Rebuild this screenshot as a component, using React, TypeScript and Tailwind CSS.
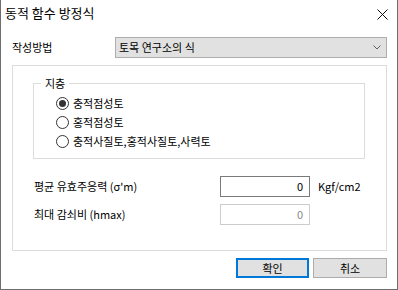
import React from "react";

const KR = '"Noto Sans CJK KR", "Noto Sans", sans-serif';

function Radio({ checked, label }: { checked?: boolean; label: string }) {
  return (
    <div className="flex items-center h-[19px]">
      <span className="w-[13px] h-[13px] rounded-full border border-[#333333] bg-white flex items-center justify-center">
        {checked && <span className="w-[7px] h-[7px] rounded-full bg-[#333333]" />}
      </span>
      <span className="ml-[4px] text-[11px] leading-none text-black">{label}</span>
    </div>
  );
}

export default function App() {
  return (
    <div
      className="w-[398px] h-[290px] bg-white border-x border-b border-[#6e6e6e] flex flex-col"
      style={{ fontFamily: KR }}
    >
      {/* Title bar */}
      <div className="h-[30px] flex items-start justify-between">
        <span className="ml-[4px] mt-[3px] text-[13px] leading-[20px] text-black">동적 함수 방정식</span>
        <svg className="mt-[9px] mr-[9px]" width="11" height="11" viewBox="0 0 11 11">
          <path d="M0.5 0.5 L10.5 10.5 M10.5 0.5 L0.5 10.5" stroke="#111" strokeWidth="1" fill="none" />
        </svg>
      </div>

      {/* Method row */}
      <div className="mt-[7px] flex items-center h-[21px] pl-[11px]">
        <span className="w-[103px] text-[11px] leading-none text-black">작성방법</span>
        <div className="w-[272px] h-[21px] bg-[#e1e1e1] border border-[#adadad] flex items-center justify-between pl-[3px] pr-[5px]">
          <span className="text-[11px] leading-none text-black">토목 연구소의 식</span>
          <svg width="8" height="5" viewBox="0 0 8 5">
            <path d="M0.5 0.5 L4 4 L7.5 0.5" stroke="#606060" strokeWidth="1" fill="none" />
          </svg>
        </div>
      </div>

      {/* Panel */}
      <div className="mt-[7px] ml-[11px] w-[375px] h-[186px] border border-[#dcdcdc] flex flex-col">
        {/* Group box */}
        <div className="relative mt-[17px] ml-[20px] w-[332px] h-[76px] border border-[#dcdcdc] flex flex-col pl-[22px] pt-[10px]">
          <span className="absolute -top-[7px] left-[7px] px-[4px] bg-white text-[11px] leading-[13px] text-black">지층</span>
          <Radio checked label="충적점성토" />
          <Radio label="홍적점성토" />
          <Radio label="충적사질토,홍적사질토,사력토" />
        </div>

        {/* Inputs */}
        <div className="mt-[17px] pl-[21px] flex items-center h-[21px]">
          <span className="w-[186px] text-[11px] leading-none text-black">평균 유효주응력 (σ'm)</span>
          <div className="w-[90px] h-[21px] border border-[#7a7a7a] bg-white flex items-center justify-end pr-[6px]">
            <span className="text-[11px] leading-none text-black">0</span>
          </div>
          <span className="ml-[8px] text-[11px] leading-none text-black">Kgf/cm2</span>
        </div>
        <div className="mt-[7px] pl-[21px] flex items-center h-[21px]">
          <span className="w-[186px] text-[11px] leading-none text-black">최대 감쇠비 (hmax)</span>
          <div className="w-[90px] h-[21px] border border-[#cccccc] bg-white flex items-center justify-end pr-[6px]">
            <span className="text-[11px] leading-none text-[#8a8a8a]">0</span>
          </div>
        </div>
      </div>

      {/* Buttons */}
      <div className="mt-[7px] flex justify-end pr-[10px] gap-[4px]">
        <div className="w-[73px] h-[20px] bg-[#e1e1e1] border-2 border-[#0078d7] flex items-center justify-center">
          <span className="text-[11px] leading-none text-black">확인</span>
        </div>
        <div className="w-[74px] h-[20px] bg-[#e1e1e1] border border-[#adadad] flex items-center justify-center">
          <span className="text-[11px] leading-none text-black">취소</span>
        </div>
      </div>
    </div>
  );
}
